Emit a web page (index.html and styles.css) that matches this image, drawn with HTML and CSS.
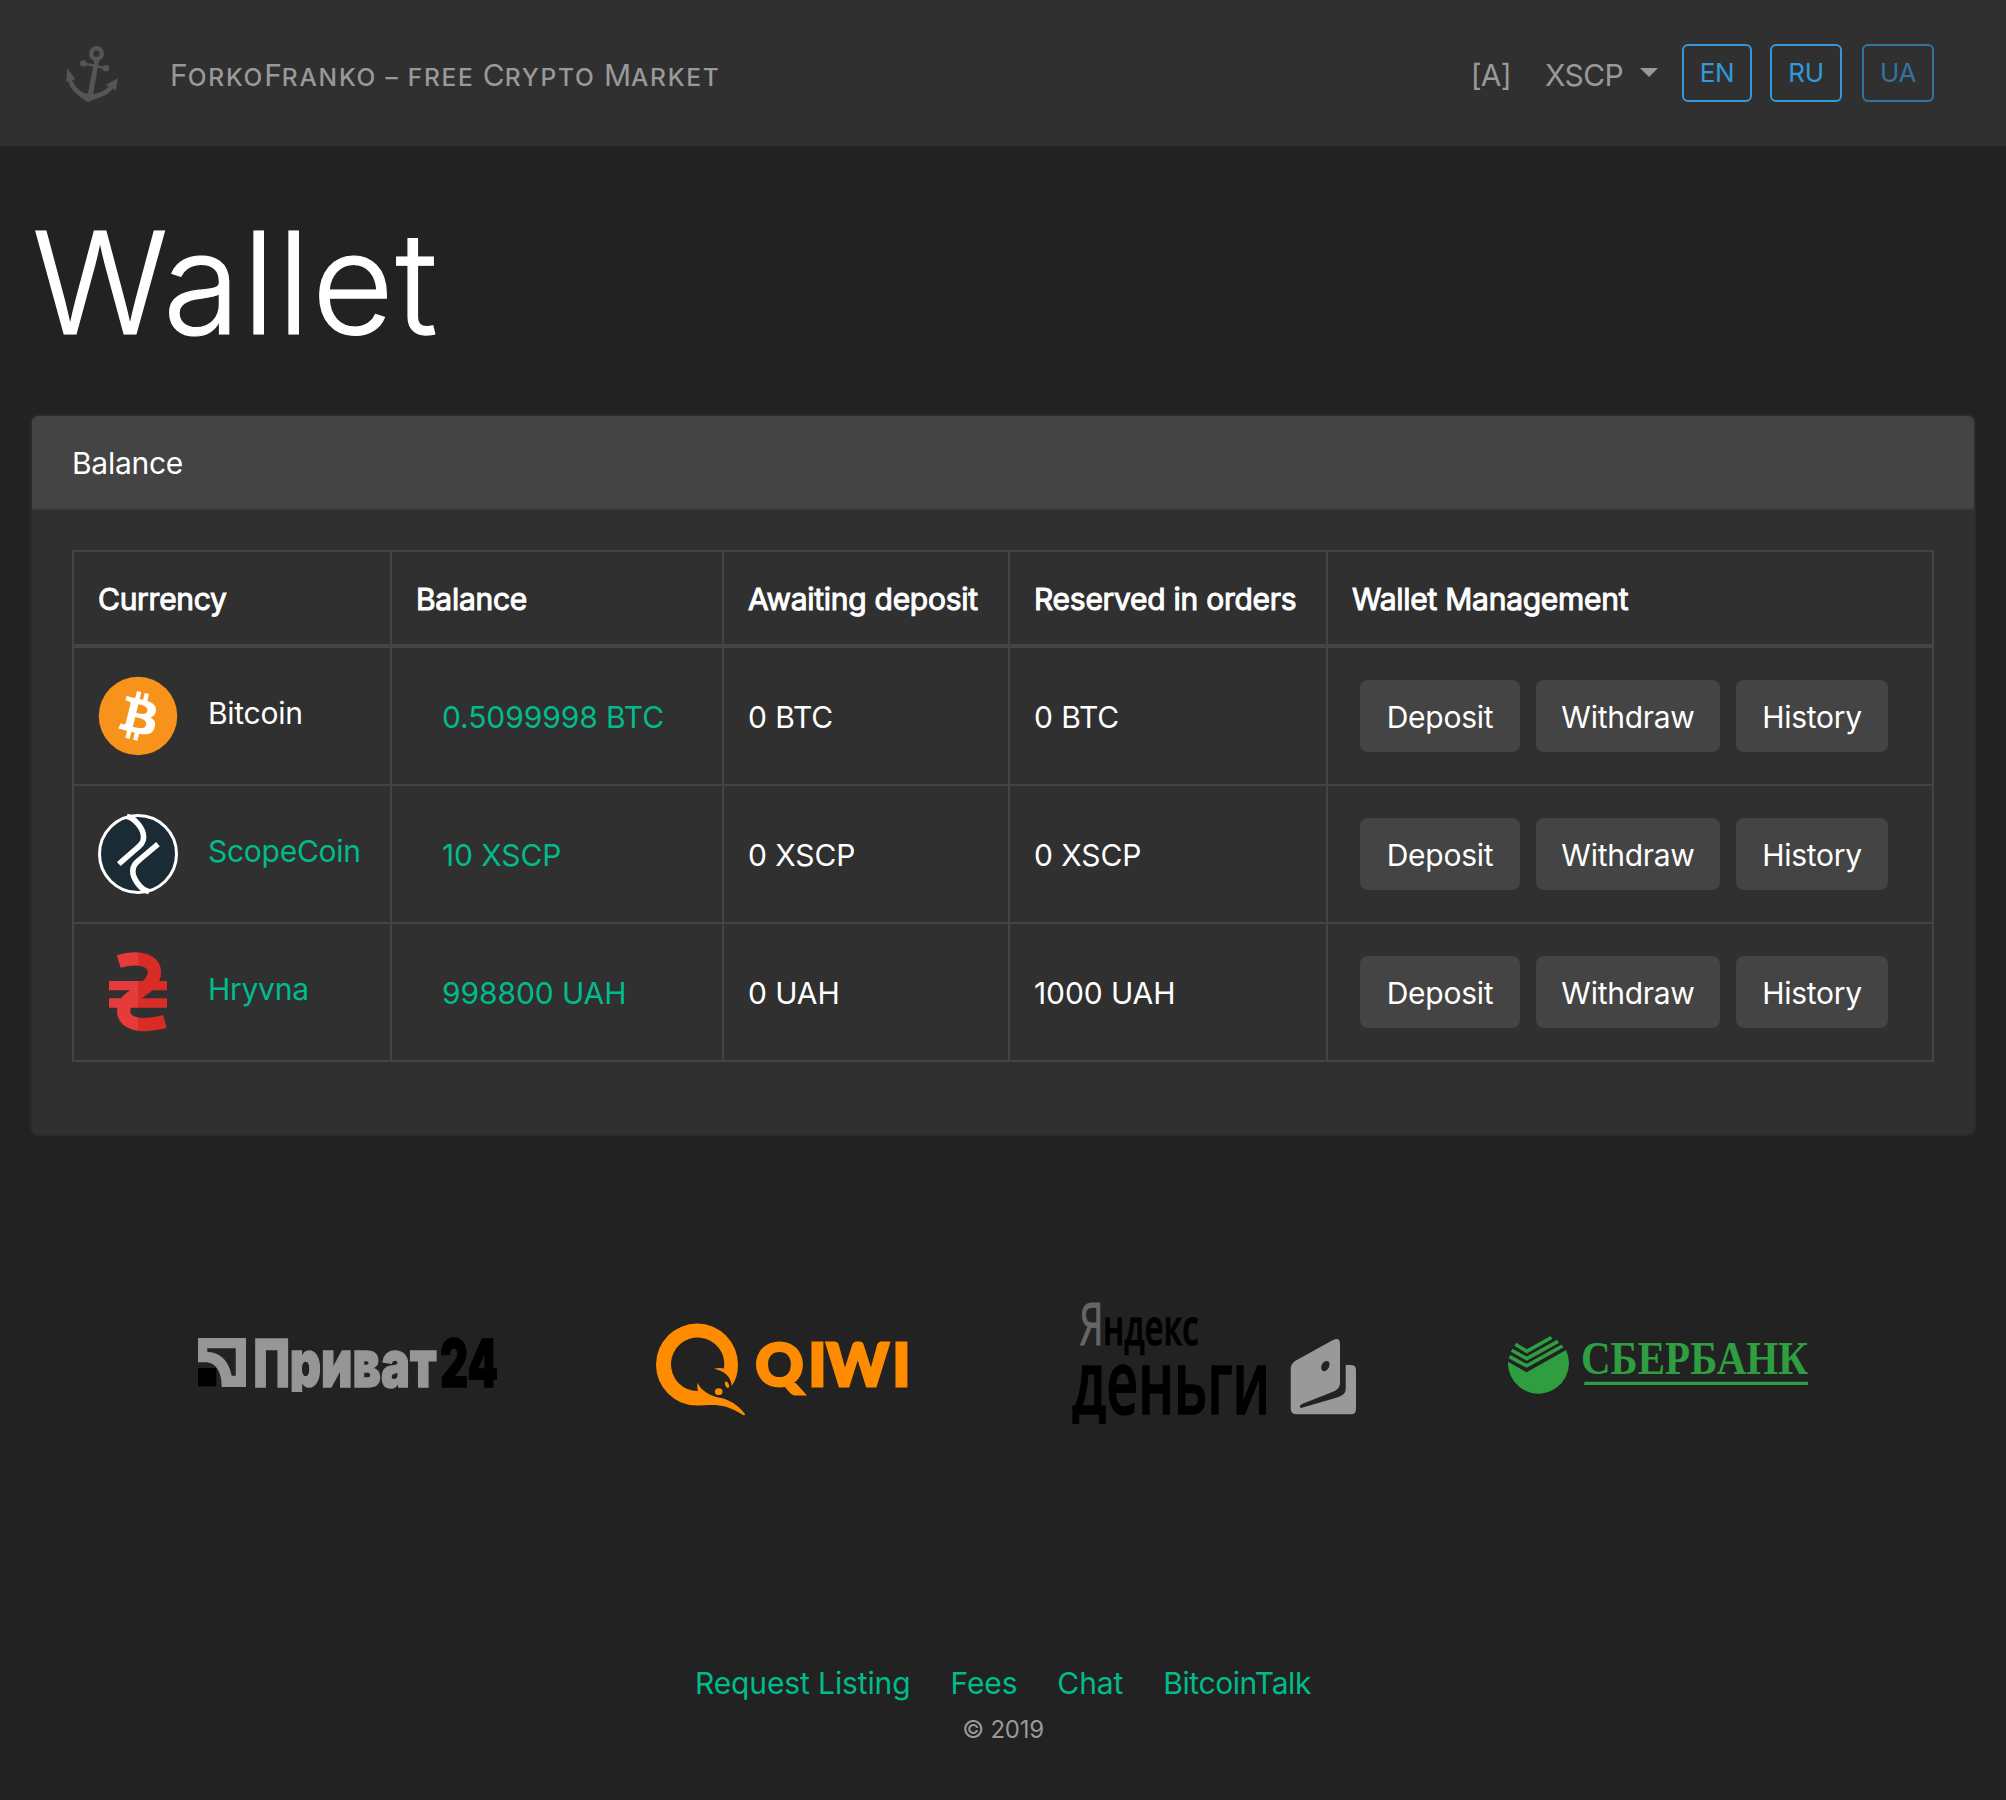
FILE: index.html
```html
<!DOCTYPE html>
<html lang="en">
<head>
<meta charset="utf-8">
<title>ForkoFranko – Wallet</title>
<link rel="stylesheet" href="styles.css">
</head>
<body>
<nav class="navbar">
  <svg class="anchor" viewBox="0 0 56 60" width="56" height="60" aria-hidden="true">
    <g fill="none" stroke="#555" stroke-linecap="round">
      <ellipse cx="32.5" cy="9.7" rx="5.2" ry="5.4" stroke-width="4.4"/>
      <path d="M20 19.6L42 24.2" stroke-width="2.600"/>
    </g>
    <g fill="#555">
      <circle cx="19.3" cy="19.4" r="3.2"/>
      <circle cx="42" cy="24.2" r="3.2"/>
      <path d="M30.6 15.5L35 16.2L29.2 50C36 49.3 42 46 45 42L40.5 41.6L54 34.3L51.6 47L49.3 44.6C43 52 34 54 24.500 57.900Q22.500 58 20.500 56C12 50 6 45 4.600 37.200L2.200 38L3.200 24L11.300 35.200L8.200 36.200C11 43 16 48.500 23.800 49.800Z"/>
    </g>
  </svg>
  <a class="brand">F<small>orko</small>F<small>ranko – free </small>C<small>rypto </small>M<small>arket</small></a>
  <div class="nav-right">
    <a class="nav-link admin">[A]</a>
    <a class="nav-link coin">XSCP<span class="caret"></span></a>
    <a class="lang lang-en">EN</a>
    <a class="lang lang-ru">RU</a>
    <a class="lang lang-ua disabled">UA</a>
  </div>
</nav>

<main class="container">
  <h1 class="title">Wallet</h1>
  <section class="card">
    <div class="card-header">Balance</div>
    <div class="card-body">
      <table class="wallet">
        <colgroup><col class="c1"><col class="c2"><col class="c3"><col class="c4"><col class="c5"></colgroup>
        <thead>
          <tr><th>Currency</th><th>Balance</th><th>Awaiting deposit</th><th>Reserved in orders</th><th>Wallet Management</th></tr>
        </thead>
        <tbody>
          <tr class="first">
            <td><div class="currency">
              <svg viewBox="0 0 32 32" width="80" height="80"><circle cx="16" cy="16" r="15.7" fill="#f7931a"/><path fill="#fff" d="M23.189 14.02c.314-2.096-1.283-3.223-3.465-3.975l.708-2.84-1.728-.43-.69 2.765c-.454-.114-.92-.22-1.385-.326l.695-2.783L15.596 6l-.708 2.839c-.376-.086-.746-.17-1.104-.26l.002-.009-2.384-.595-.46 1.846s1.283.294 1.256.312c.7.175.826.638.805 1.006l-.806 3.235c.048.012.11.03.18.057l-.183-.045-1.13 4.532c-.086.212-.303.531-.793.41.018.025-1.256-.313-1.256-.313l-.858 1.978 2.25.561c.418.105.828.215 1.231.318l-.715 2.872 1.727.43.708-2.84c.472.127.93.245 1.378.357l-.706 2.828 1.728.43.715-2.866c2.948.558 5.164.333 6.097-2.333.752-2.146-.037-3.385-1.588-4.192 1.13-.26 1.98-1.003 2.207-2.538zm-3.95 5.538c-.533 2.147-4.148.986-5.32.695l.95-3.805c1.172.293 4.929.872 4.37 3.11zm.535-5.569c-.487 1.953-3.495.96-4.47.717l.86-3.45c.975.243 4.118.696 3.61 2.733z"/></svg>
              <span>Bitcoin</span></div></td>
            <td class="num"><a class="amount">0.5099998 BTC</a></td><td class="num">0 BTC</td><td class="num">0 BTC</td>
            <td><div class="actions"><a class="btn deposit">Deposit</a><a class="btn withdraw">Withdraw</a><a class="btn history">History</a></div></td>
          </tr>
          <tr>
            <td><div class="currency">
              <svg viewBox="0 0 80 80" width="80" height="80"><circle cx="40" cy="40" r="38.500" fill="#1a2b35" stroke="#fff" stroke-width="3"/><g fill="none" stroke="#fff" stroke-width="5.600"><path d="M29 2.500C37 4 45.600 15 45.600 23C45.600 29 42 31.500 38 35L20.800 50"/><path d="M51 77.500C43 76 34.800 65 34.800 57C34.800 51 38.400 48.500 42.400 45L60 30.200"/></g></svg>
              <a>ScopeCoin</a></div></td>
            <td class="num"><a class="amount">10 XSCP</a></td><td class="num">0 XSCP</td><td class="num">0 XSCP</td>
            <td><div class="actions"><a class="btn deposit">Deposit</a><a class="btn withdraw">Withdraw</a><a class="btn history">History</a></div></td>
          </tr>
          <tr>
            <td><div class="currency">
              <svg viewBox="0 0 80 80" width="80" height="80">
                <linearGradient id="uah" gradientUnits="userSpaceOnUse" x1="0" y1="0" x2="80" y2="0"><stop offset=".5" stop-color="#e53b3b"/><stop offset=".5" stop-color="#d92c27"/></linearGradient>
                <path fill="url(#uah)" d="M11 29H69V38.300H11ZM11 46.300H69V55.700H11Z"/>
                <path fill="none" stroke="url(#uah)" stroke-width="13.200" d="M20.700 9.500C38 4 56.500 7 56.500 20C56.500 31 46 36 41 40C34 45 25.600 49 25.600 59C25.600 72 43 76 66.900 69.300"/>
              </svg>
              <a>Hryvna</a></div></td>
            <td class="num"><a class="amount">998800 UAH</a></td><td class="num">0 UAH</td><td class="num">1000 UAH</td>
            <td><div class="actions"><a class="btn deposit">Deposit</a><a class="btn withdraw">Withdraw</a><a class="btn history">History</a></div></td>
          </tr>
        </tbody>
      </table>
    </div>
  </section>
</main>

<section class="partners">
  <svg class="privat" viewBox="0 -38 300 126" width="300" height="126">
    <clipPath id="privat-band"><path d="M-10 -38H310V54H-10Z"/></clipPath>
    <path fill="#969696" fill-rule="evenodd" d="M0 0H48V49H23.700C23.700 34 18 24.300 7 24.300H0ZM9.300 10.300V13.700C24 15 31 24 33.700 37.700H37.700V10.300Z"/>
    <path d="M0 30H18.300V48.300H0Z"/>
    <g clip-path="url(#privat-band)">
      <text class="impact" x="55.500" y="48.500" font-size="66" textLength="183" lengthAdjust="spacingAndGlyphs" fill="#969696" stroke="#969696" stroke-width="1.500">Приват</text>
      <text class="impact" x="242" y="48.500" font-size="66" textLength="58" lengthAdjust="spacingAndGlyphs" stroke="#000" stroke-width="1.500">24</text>
    </g>
  </svg>
  <svg class="qiwi" viewBox="0 -24 252 126" width="252" height="126" fill="#ff8c00">
    <path d="M75.700 62C80 56 82 49 82 41A41 41 0 1 0 41 81.600C54 81.500 67 77.500 87 91Q89.500 91.500 89 90C82 81 73 75.500 64 73.800C54 72 44 66 42 58.700C41 61 41 64 42 67A26.700 26.700 0 1 1 68 44.600C65 43.800 61 44 58 44.700C68 47 75 52 75.700 62Z"/>
    <ellipse cx="62.700" cy="67.700" rx="3.800" ry="3.400"/><ellipse cx="71" cy="60.700" rx="1.800" ry="3.400" transform="rotate(-20 71 60.700)"/>
    <text class="geo" x="99.500 152.500 170.500 236.500" y="62" font-size="59" stroke="#ff8c00" stroke-width="3">QIWI</text>
  </svg>
  <svg class="yandex" viewBox="0 -3 284 126" width="284" height="126">
    <clipPath id="yandex-band"><path d="M-10 -3H294V121H-10Z"/></clipPath>
    <text class="hum light" x="7.500" y="42" font-size="58" textLength="24" lengthAdjust="spacingAndGlyphs" fill="#666" stroke="#666">Я</text>
    <text class="hum" x="31" y="42" font-size="51" textLength="95.500" lengthAdjust="spacingAndGlyphs" stroke="#000">ндекс</text>
    <g clip-path="url(#yandex-band)"><text class="hum" x="0" y="110.500" font-size="89" textLength="198" lengthAdjust="spacingAndGlyphs" stroke="#000" stroke-width="1.500">деньги</text></g>
    <path fill="#999" fill-rule="evenodd" d="M218.700 66Q218.700 61 223 58L261 37Q268 33.500 268 41V80Q268 86 261 88.700L230 101Q226 103.500 229 105L265 94.500Q273.700 92 273.700 86V62H279Q284 62 284 67V106Q284 111.300 279 111.300H224.500Q218.700 111.300 218.700 105ZM249.500 66C250.500 69.500 254.500 68.500 256.500 65C258.500 61 257.500 57.500 254 58C250.500 59 248.500 63 249.500 66Z"/>
  </svg>
  <svg class="sber" viewBox="0 -36 301 126" width="301" height="126" fill="#2f9e41">
    <path d="M0 25.700L18.700 36.300L58 14A30.500 30.500 0 1 1 0 25.700Z"/>
    <g fill="none" stroke="#2f9e41" stroke-width="3.600"><path d="M7.300 8.300L18.700 15.300L43.500 1.500"/><path d="M3.800 14.300L18.700 22.600L50 5.300"/><path d="M1.500 20.600L18.700 29.800L54.500 10"/></g>
    <text class="serif" x="73" y="38" font-size="47" textLength="227" lengthAdjust="spacingAndGlyphs">СБЕРБАНК</text>
    <path d="M76.300 45.700H300V49H76.300Z"/>
  </svg>
</section>

<footer class="footer">
  <div class="links"><a>Request Listing</a><a>Fees</a><a>Chat</a><a class="talk">BitcoinTalk</a></div>
  <div class="copy">© 2019</div>
</footer>
</body>
</html>
```
FILE: styles.css
```css
* { box-sizing: border-box; }
body {
  margin: 0;
  min-height: 1800px;
  background: #222;
  color: #fff;
  font: 400 30px/45px Inter, "Liberation Sans", sans-serif;
  letter-spacing: -.27px;
}
a { color: #00bc8c; }
svg { display: block; flex: none; overflow: visible; letter-spacing: 0; }

.navbar {
  display: flex;
  align-items: center;
  height: 146px;
  padding: 0 72px 0 64px;
  background: #303030;
}
.anchor { margin-top: 2px; }
.brand { margin: 6px 0 0 50px; color: #999; letter-spacing: 0; white-space: nowrap; }
.brand small { font-size: 24.5px; font-weight: 450; letter-spacing: 1.75px; text-transform: uppercase; }
.nav-right { display: flex; align-items: center; margin-left: auto; }
.nav-link { margin-top: 5px; color: #999; }
.admin { letter-spacing: -.8px; }
.coin { display: flex; align-items: flex-start; margin-left: 34px; letter-spacing: -.6px; }
.caret {
  margin: 15px 0 0 17px;
  border: 9px solid transparent;
  border-top-color: #999;
  border-bottom: 0;
}
.lang {
  height: 58px;
  border: 2px solid #3498db;
  border-radius: 6px;
  color: #3498db;
  font-size: 26px;
  line-height: 54px;
  text-align: center;
}
.lang-en { width: 70px; margin-left: 24px; }
.lang-ru { width: 72px; margin-left: 18px; }
.lang-ua { width: 72px; margin-left: 20px; }
.disabled { opacity: .65; }

.container { padding: 0 30px; }
.title {
  height: 268px;
  margin: 0;
  padding: 52px 0 0 2px;
  font-size: 141px;
  font-weight: 300;
  letter-spacing: 1.9px;
  line-height: 169px;
  -webkit-text-stroke: 1.2px #fff;
}
.card {
  height: 722px;
  border: 2px solid #2a2a2a;
  border-radius: 8px;
  background: #303030;
}
.card-header {
  height: 94px;
  padding: 25px 40px 0;
  border-bottom: 2px solid #3b3b3b;
  border-radius: 6px 6px 0 0;
  background: #444;
}
.card-body { padding: 40px; }

.wallet { width: 1862px; table-layout: fixed; border-collapse: collapse; }
.wallet th, .wallet td { padding: 0 24px; border: 2px solid #444; text-align: left; vertical-align: middle; }
.wallet th { height: 95px; padding-top: 2px; border-bottom-width: 4px; font-weight: 400; -webkit-text-stroke: 1px #fff; }
.wallet td { height: 138px; }
.wallet .first td { height: 139px; }
.wallet .num { padding-top: 2px; letter-spacing: -.1px; }
.c1 { width: 318px; }
.c2 { width: 332px; }
.c3 { width: 286px; }
.c4 { width: 318px; }
.c5 { width: 606px; }
.currency { display: flex; align-items: center; gap: 30px; }
.currency span, .currency a { margin-top: -5px; }
.amount { padding-left: 26px; }
.actions { display: flex; gap: 16px; padding-left: 8px; }
.btn { height: 72px; border-radius: 8px; background: #444; color: #fff; line-height: 74px; text-align: center; }
.deposit { width: 160px; }
.withdraw { width: 184px; }
.history { width: 152px; }

.partners { display: flex; height: 126px; margin: 164px 198px 0; }
.qiwi { margin-left: 158px; }
.yandex { margin-left: 164px; }
.sber { margin-left: 152px; }
.impact { font-family: Inter, sans-serif; font-weight: 900; }
.geo { font-family: Lato, sans-serif; font-weight: 900; }
.hum { font-family: "Open Sans", sans-serif; font-weight: 600; }
.light { font-weight: 400; }
.serif { font-family: "Liberation Serif", serif; font-weight: 700; }

.footer { padding-top: 235px; text-align: center; }
.links { display: flex; justify-content: center; gap: 40px; letter-spacing: -.12px; }
.talk { letter-spacing: -.4px; }
.copy { margin-top: 6px; color: #999; font-size: 24px; line-height: 36px; }
```
